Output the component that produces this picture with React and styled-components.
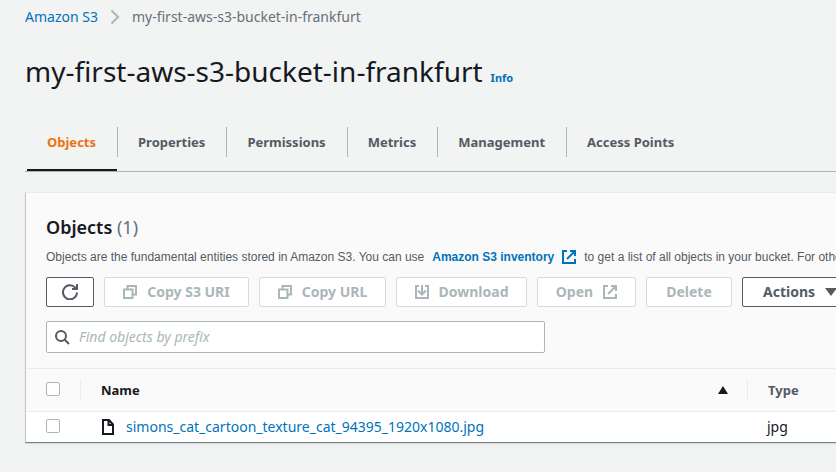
import React from "react";
import styled, { createGlobalStyle } from "styled-components";

const GlobalStyle = createGlobalStyle`
  *, *::before, *::after { box-sizing: border-box; }
  body {
    margin: 0;
    background: #f2f3f3;
    color: #16191f;
    font-family: "Noto Sans", "Open Sans", sans-serif;
    font-size: 14px;
    line-height: 20px;
    overflow-x: hidden;
  }
  button, input { font: inherit; }
`;

const Page = styled.main`
  padding: 7px 0 28px 25px;
  white-space: nowrap;
  overflow: hidden;
`;

const Link = styled.a`
  color: #0073bb;
  font-weight: ${(p) => (p.$bold ? 700 : 400)};
  text-decoration: none;
  &:hover { text-decoration: underline; }
`;

const Breadcrumbs = styled.nav`
  display: flex;
  align-items: center;
  gap: 12px;
  color: #687078;
`;

const TitleBar = styled.header`
  display: flex;
  align-items: baseline;
  gap: 8px;
  margin-top: 26px;
`;

const Title = styled.h1`
  margin: 0;
  font-size: 28px;
  line-height: 36px;
  font-weight: 400;
`;

const InfoLink = styled(Link)`
  font-size: 11px;
  font-weight: 700;
`;

const Tabs = styled.div`
  display: flex;
  margin-top: 38px;
  padding-left: 2px;
  border-bottom: 1px solid #aab7b8;
`;

const Tab = styled.button`
  display: flex;
  height: 44px;
  padding: 0;
  border: 0;
  border-bottom: 2px solid ${(p) => (p.$active ? "#16191f" : "transparent")};
  background: none;
  color: ${(p) => (p.$active ? "#ec7211" : "#545b64")};
  font-size: 13px;
  font-weight: 700;
  cursor: pointer;
`;

const TabLabel = styled.span`
  padding: 0 21px 0 20px;
  line-height: 30px;
`;

const TabDivider = styled.span`
  width: 1px;
  height: 30px;
  background: #aab7b8;
`;

const Panel = styled.section`
  margin-top: 20px;
  border-top: 1px solid #eaeded;
  border-left: 1px solid #c3c9cb;
  border-bottom: 1px solid #75858a;
  box-shadow: 0 1px 1px #d5dbdb;
  background: #fafafa;
`;

const PanelHeader = styled.div`
  padding: 22px 0 15px 20px;
`;

const PanelTitle = styled.h2`
  margin: 0;
  font-size: 18px;
  line-height: 24px;
  font-weight: 600;
`;

const Count = styled.span`
  color: #687078;
  font-weight: 400;
`;

const Description = styled.p`
  display: flex;
  align-items: center;
  gap: 8px;
  margin: 8px 0 10px;
  color: #545b64;
  font-family: "Liberation Sans", Arial, sans-serif;
  font-size: 12px;
`;

const InventoryLink = styled(Link)`
  display: flex;
  align-items: center;
  gap: 8px;
`;

const Toolbar = styled.div`
  display: flex;
  gap: 10px;
`;

const Button = styled.button`
  display: flex;
  flex: none;
  align-items: center;
  justify-content: center;
  gap: 10px;
  height: 30px;
  min-width: ${(p) => p.$width}px;
  padding: 0 15px;
  border: 1px solid #545b64;
  border-radius: 2px;
  background: #fff;
  color: #545b64;
  font-weight: 700;
  cursor: pointer;
  &:disabled {
    border-color: #d5dbdb;
    color: #aab7b8;
    cursor: default;
  }
`;

const SearchBox = styled.label`
  display: flex;
  align-items: center;
  gap: 9px;
  width: 499px;
  max-width: 100%;
  height: 32px;
  margin-top: 14px;
  padding: 0 8px;
  border: 1px solid #aab7b8;
  border-radius: 2px;
  background: #fff;
  color: #545b64;
`;

const SearchInput = styled.input`
  flex: 1;
  min-width: 0;
  padding: 0;
  border: 0;
  outline: 0;
  background: none;
  color: #16191f;
  &::placeholder {
    color: #aab7b8;
    font-style: italic;
    opacity: 1;
  }
`;

const Table = styled.table`
  width: 100%;
  table-layout: fixed;
  border-collapse: collapse;
  text-align: left;
`;

const SelectCol = styled.col`width: 54px;`;
const TypeCol = styled.col`width: 89px;`;

const HeadCell = styled.th`
  height: 43px;
  padding: 0 0 0 ${(p) => (p.$select ? 20 : 0)}px;
  border-top: 1px solid #eaeded;
  border-bottom: 1px solid #eaeded;
  color: ${(p) => (p.$sorted ? "#16191f" : "#545b64")};
  font-size: 13px;
  font-weight: 700;
`;

const HeadContent = styled.div`
  display: flex;
  align-items: center;
  justify-content: space-between;
  height: 22px;
  padding: 0 19px 0 20px;
  border-left: 1px solid #eaeded;
`;

const BodyCell = styled.td`
  height: 30px;
  padding: 0 0 0 20px;
  background: #fff;
`;

const FileName = styled.div`
  display: flex;
  align-items: center;
  gap: 12px;
  padding-left: 2px;
`;

const Checkbox = styled.input`
  appearance: none;
  display: block;
  width: 14px;
  height: 14px;
  margin: 0 0 2px;
  border: 1px solid #aab7b8;
  border-radius: 2px;
  background: #fff;
  &:checked { background: #0073bb; }
`;

const Icon = styled.svg.attrs({ "aria-hidden": true })`
  display: block;
  flex: none;
  fill: none;
  stroke: currentColor;
  stroke-width: 2;
`;

const ChevronIcon = styled(Icon)`color: #aab7b8;`;
const FileIcon = styled(Icon)`color: #16191f;`;

const CopyIcon = () => (
  <Icon width="14" height="14" viewBox="0 0 14 14">
    <path d="M1 4.500h8.500V13H1z M4.500 4.500V1H13v8.500H9.500" />
  </Icon>
);

const DownloadIcon = () => (
  <Icon width="14" height="14" viewBox="0 0 14 14">
    <path d="M4 1H1v12h12V1h-3 M7 0v9 M3 5.500l4 4 4-4" />
  </Icon>
);

const ExternalIcon = () => (
  <Icon width="14" height="14" viewBox="0 0 14 14">
    <path d="M5 1H1v12h12V9 M8 1h5v5 M13 1L5 9" />
  </Icon>
);

const RefreshIcon = () => (
  <Icon width="16" height="16" viewBox="0 0 16 16">
    <path d="M15 8.500A7 7 0 1 1 13.200 3.600L15 5 M15 0v5h-5" />
  </Icon>
);

const SearchIcon = () => (
  <Icon width="15" height="15" viewBox="0 0 15 15">
    <circle cx="6" cy="6" r="5" />
    <path d="M9.500 9.500l4.500 4.500" />
  </Icon>
);

const tabs = ["Objects", "Properties", "Permissions", "Metrics", "Management", "Access Points"];

export default function App() {
  return (
    <Page>
      <GlobalStyle />
      <Breadcrumbs aria-label="Breadcrumbs">
        <Link href="#s3">Amazon S3</Link>
        <ChevronIcon width="10" height="16" viewBox="0 0 10 16">
          <path d="M1.500 1.500L8 8l-6.500 6.500" />
        </ChevronIcon>
        <span>my-first-aws-s3-bucket-in-frankfurt</span>
      </Breadcrumbs>
      <TitleBar>
        <Title>my-first-aws-s3-bucket-in-frankfurt</Title>
        <InfoLink href="#info">Info</InfoLink>
      </TitleBar>
      <Tabs role="tablist">
        {tabs.map((name, i) => (
          <React.Fragment key={name}>
            {i > 0 && <TabDivider />}
            <Tab type="button" role="tab" aria-selected={i === 0} $active={i === 0}>
              <TabLabel>{name}</TabLabel>
            </Tab>
          </React.Fragment>
        ))}
      </Tabs>
      <Panel>
        <PanelHeader>
          <PanelTitle>
            Objects <Count>(1)</Count>
          </PanelTitle>
          <Description>
            <span>Objects are the fundamental entities stored in Amazon S3. You can use</span>
            <InventoryLink href="#inventory" $bold>
              Amazon S3 inventory
              <ExternalIcon />
            </InventoryLink>
            <span>to get a list of all objects in your bucket. For others</span>
          </Description>
          <Toolbar>
            <Button type="button" $width={48} aria-label="Refresh"><RefreshIcon /></Button>
            <Button type="button" $width={145} disabled><CopyIcon />Copy S3 URI</Button>
            <Button type="button" $width={127} disabled><CopyIcon />Copy URL</Button>
            <Button type="button" $width={131} disabled><DownloadIcon />Download</Button>
            <Button type="button" $width={99} disabled>Open<ExternalIcon /></Button>
            <Button type="button" $width={86} disabled>Delete</Button>
            <Button type="button" $width={116}>
              Actions
              <Icon width="12" height="8" viewBox="0 0 12 8">
                <path d="M0 0h12L6 8z" fill="currentColor" stroke="none" />
              </Icon>
            </Button>
          </Toolbar>
          <SearchBox>
            <SearchIcon />
            <SearchInput type="text" placeholder="Find objects by prefix" aria-label="Find objects by prefix" />
          </SearchBox>
        </PanelHeader>
        <Table>
          <colgroup>
            <SelectCol />
            <col />
            <TypeCol />
          </colgroup>
          <thead>
            <tr>
              <HeadCell $select><Checkbox type="checkbox" aria-label="Select all objects" /></HeadCell>
              <HeadCell $sorted aria-sort="ascending">
                <HeadContent>
                  Name
                  <Icon width="10" height="8" viewBox="0 0 10 8">
                    <path d="M0 8L5 0l5 8z" fill="currentColor" stroke="none" />
                  </Icon>
                </HeadContent>
              </HeadCell>
              <HeadCell><HeadContent>Type</HeadContent></HeadCell>
            </tr>
          </thead>
          <tbody>
            <tr>
              <BodyCell><Checkbox type="checkbox" aria-label="Select object" /></BodyCell>
              <BodyCell>
                <FileName>
                  <FileIcon width="12" height="16" viewBox="0 0 12 16">
                    <path d="M1 1h6l4 4.500V15H1z M6.500 1v5H11" />
                  </FileIcon>
                  <Link href="#object">simons_cat_cartoon_texture_cat_94395_1920x1080.jpg</Link>
                </FileName>
              </BodyCell>
              <BodyCell>jpg</BodyCell>
            </tr>
          </tbody>
        </Table>
      </Panel>
    </Page>
  );
}
